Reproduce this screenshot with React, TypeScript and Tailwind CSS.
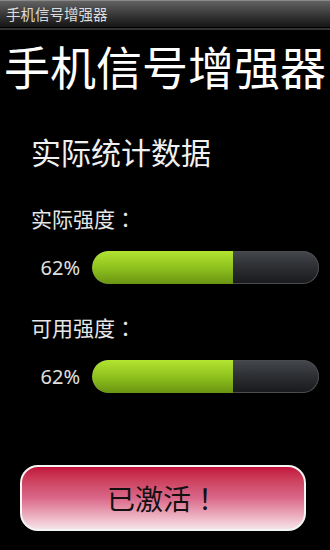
import React from "react";

const cjk = { fontFamily: '"Noto Sans CJK SC", "Noto Sans", sans-serif' };
const tc = { fontFamily: '"Noto Sans CJK TC", "Noto Sans", sans-serif' };

function Bar({ pct }: { pct: number }) {
  return (
    <div className="relative h-[33px] w-[227px] overflow-hidden rounded-full bg-gradient-to-b from-[#45484d] via-[#2c2e32] to-[#18191b] shadow-[inset_0_0_0_1px_#4a4c50]">
      <div
        className="h-full rounded-l-full bg-gradient-to-b from-[#b2e431] via-[#8fc21d] to-[#6a9512]"
        style={{ width: `${pct}%` }}
      />
    </div>
  );
}

function Row({ label, pct }: { label: string; pct: number }) {
  return (
    <div>
      <div className="pl-[31px] text-[21px] leading-none text-[#e6e6e6]" style={cjk}>
        {label}
        <span style={tc}>：</span>
      </div>
      <div className="mt-[22px] flex items-center">
        <div
          className="w-[81px] pr-[1px] text-right text-[20px] leading-none text-[#e0e0e0]"
          style={{ fontFamily: '"Noto Sans", "Open Sans", sans-serif' }}
        >
          {pct}%
        </div>
        <div className="ml-[11px]">
          <Bar pct={pct} />
        </div>
      </div>
    </div>
  );
}

export default function App() {
  return (
    <div className="h-[550px] w-[330px] overflow-hidden bg-black" style={cjk}>
      <div className="flex h-[27px] items-center border-t border-[#8a8a8a] bg-gradient-to-b from-[#626262] to-[#161616] pl-[6px] text-[14.5px] leading-none text-[#dcdcdc]">
        手机信号增强器
      </div>
      <div className="mt-[1px] h-[2px] bg-[#333333]" />
      <div className="mt-[12px] text-center text-[46px] leading-none text-white">手机信号增强器</div>
      <div className="mt-[48px] pl-[31px] text-[30px] leading-none text-[#f0f0f0]">实际统计数据</div>
      <div className="mt-[42px]">
        <Row label="实际强度" pct={62} />
      </div>
      <div className="mt-[33px]">
        <Row label="可用强度" pct={62} />
      </div>
      <div className="mt-[72px] flex justify-center pr-[4px]">
        <div className="flex h-[66px] w-[286px] items-center justify-center rounded-[18px] border-2 border-[#f4f4f4] bg-gradient-to-b from-[#c20f3b] via-[#d9678a] to-[#f4e3ea] text-[28px] leading-none text-[#111]">
          已激活<span style={tc}>！</span>
        </div>
      </div>
    </div>
  );
}
